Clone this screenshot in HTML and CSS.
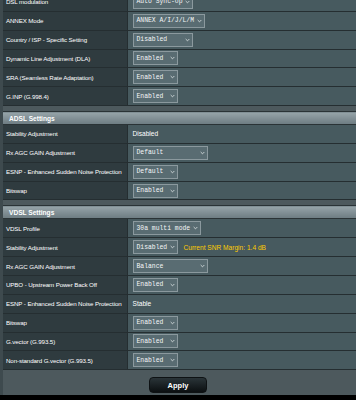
FILE: index.html
```html
<!DOCTYPE html>
<html lang="en">
<head>
  <meta charset="UTF-8">
  <title>DSL Settings</title>
  <link rel="stylesheet" href="styles.css">
</head>
<body>
  <div class="page">
    <table class="form-table first">
      <colgroup><col class="label-col"><col></colgroup>
      <tr>
        <th>DSL modulation</th>
        <td><div class="select w60"><span>Auto Sync-Up</span><svg class="arrow" viewBox="0 0 6 4"><path d="M0.8 0.8 L3 3 L5.2 0.8"/></svg></div></td>
      </tr>
      <tr>
        <th>ANNEX Mode</th>
        <td><div class="select w72"><span>ANNEX A/I/J/L/M</span><svg class="arrow" viewBox="0 0 6 4"><path d="M0.8 0.8 L3 3 L5.2 0.8"/></svg></div></td>
      </tr>
      <tr>
        <th>Country / ISP - Specific Setting</th>
        <td><div class="select w60"><span>Disabled</span><svg class="arrow" viewBox="0 0 6 4"><path d="M0.8 0.8 L3 3 L5.2 0.8"/></svg></div></td>
      </tr>
      <tr>
        <th>Dynamic Line Adjustment (DLA)</th>
        <td><div class="select"><span>Enabled</span><svg class="arrow" viewBox="0 0 6 4"><path d="M0.8 0.8 L3 3 L5.2 0.8"/></svg></div></td>
      </tr>
      <tr>
        <th>SRA (Seamless Rate Adaptation)</th>
        <td><div class="select"><span>Enabled</span><svg class="arrow" viewBox="0 0 6 4"><path d="M0.8 0.8 L3 3 L5.2 0.8"/></svg></div></td>
      </tr>
      <tr>
        <th>G.INP (G.998.4)</th>
        <td><div class="select"><span>Enabled</span><svg class="arrow" viewBox="0 0 6 4"><path d="M0.8 0.8 L3 3 L5.2 0.8"/></svg></div></td>
      </tr>
    </table>

    <table class="form-table">
      <colgroup><col class="label-col"><col></colgroup>
      <thead>
        <tr><td colspan="2">ADSL Settings</td></tr>
      </thead>
      <tr>
        <th>Stability Adjustment</th>
        <td>Disabled</td>
      </tr>
      <tr>
        <th>Rx AGC GAIN Adjustment</th>
        <td><div class="select w75"><span>Default</span><svg class="arrow" viewBox="0 0 6 4"><path d="M0.8 0.8 L3 3 L5.2 0.8"/></svg></div></td>
      </tr>
      <tr>
        <th>ESNP - Enhanced Sudden Noise Protection</th>
        <td><div class="select"><span>Default</span><svg class="arrow" viewBox="0 0 6 4"><path d="M0.8 0.8 L3 3 L5.2 0.8"/></svg></div></td>
      </tr>
      <tr>
        <th>Bitswap</th>
        <td><div class="select"><span>Enabled</span><svg class="arrow" viewBox="0 0 6 4"><path d="M0.8 0.8 L3 3 L5.2 0.8"/></svg></div></td>
      </tr>
    </table>

    <table class="form-table">
      <colgroup><col class="label-col"><col></colgroup>
      <thead>
        <tr><td colspan="2">VDSL Settings</td></tr>
      </thead>
      <tr>
        <th>VDSL Profile</th>
        <td><div class="select w68"><span>30a multi mode</span><svg class="arrow" viewBox="0 0 6 4"><path d="M0.8 0.8 L3 3 L5.2 0.8"/></svg></div></td>
      </tr>
      <tr>
        <th>Stability Adjustment</th>
        <td>
          <div class="inline">
            <div class="select"><span>Disabled</span><svg class="arrow" viewBox="0 0 6 4"><path d="M0.8 0.8 L3 3 L5.2 0.8"/></svg></div>
            <span class="hint">Current SNR Margin: 1.4 dB</span>
          </div>
        </td>
      </tr>
      <tr>
        <th>Rx AGC GAIN Adjustment</th>
        <td><div class="select w75"><span>Balance</span><svg class="arrow" viewBox="0 0 6 4"><path d="M0.8 0.8 L3 3 L5.2 0.8"/></svg></div></td>
      </tr>
      <tr>
        <th>UPBO - Upstream Power Back Off</th>
        <td><div class="select"><span>Enabled</span><svg class="arrow" viewBox="0 0 6 4"><path d="M0.8 0.8 L3 3 L5.2 0.8"/></svg></div></td>
      </tr>
      <tr>
        <th>ESNP - Enhanced Sudden Noise Protection</th>
        <td>Stable</td>
      </tr>
      <tr>
        <th>Bitswap</th>
        <td><div class="select"><span>Enabled</span><svg class="arrow" viewBox="0 0 6 4"><path d="M0.8 0.8 L3 3 L5.2 0.8"/></svg></div></td>
      </tr>
      <tr>
        <th>G.vector (G.993.5)</th>
        <td><div class="select"><span>Enabled</span><svg class="arrow" viewBox="0 0 6 4"><path d="M0.8 0.8 L3 3 L5.2 0.8"/></svg></div></td>
      </tr>
      <tr>
        <th>Non-standard G.vector (G.993.5)</th>
        <td><div class="select"><span>Enabled</span><svg class="arrow" viewBox="0 0 6 4"><path d="M0.8 0.8 L3 3 L5.2 0.8"/></svg></div></td>
      </tr>
    </table>

    <div class="apply-bar">
      <button class="apply-button">Apply</button>
    </div>
  </div>

  <div class="footer">
    <div class="footer-bar"></div>
  </div>
</body>
</html>
```

FILE: styles.css
```css
body {
  margin: 0;
  background-color: #4d595d;
  font-family: "Liberation Sans", Arial, sans-serif;
  font-size: 6.6px;
  color: #fff;
  overflow: hidden;
}

.page {
  margin-top: -7px;
  padding-left: 3px;
  background: linear-gradient(to right, #3e4a4e 0, #3e4a4e 3px, #4d595d 3px);
}

.form-table {
  width: 100%;
  table-layout: fixed;
  border-collapse: collapse;
  margin-bottom: 5px;
}

.label-col {
  width: 124px;
}

.form-table th,
.form-table td {
  height: 17.85px;
  padding: 0;
  border-bottom: 1px solid #252e31;
  white-space: nowrap;
}

.form-table th {
  padding-left: 3px;
  text-align: left;
  font-size: 6.2px;
  letter-spacing: -0.12px;
  font-weight: normal;
  background-color: #2f3b3f;
  border-right: 1px solid #252e31;
}

.form-table td {
  padding-left: 5px;
  background-color: #475a5f;
}

.form-table thead td {
  height: 12px;
  padding-left: 6px;
  font-weight: bold;
  background: linear-gradient(to bottom, #96a4a9, #6c7b81);
  border-top: 1px solid #2a3336;
  border-bottom: 1px solid #2a3336;
}

.select {
  display: flex;
  align-items: center;
  justify-content: space-between;
  width: 45px;
  height: 14px;
  box-sizing: border-box;
  padding: 0 2px 0 3px;
  background-color: #596c72;
  border: 1px solid #8b999e;
  font-family: "Liberation Mono", "Courier New", monospace;
  font-size: 6.4px;
  color: #f4f6f7;
  white-space: nowrap;
  overflow: hidden;
}

.select.w60 { width: 60px; }
.select.w68 { width: 68px; }
.select.w72 { width: 72px; }
.select.w75 { width: 75px; }

.arrow {
  width: 5px;
  height: 4px;
  flex: none;
  fill: none;
  stroke: #dde4e6;
  stroke-width: 1;
}

.inline {
  display: flex;
  align-items: center;
  gap: 6px;
}

.hint {
  color: #ffcc00;
}

.apply-bar {
  display: flex;
  justify-content: center;
  padding: 3px 0 2px;
  margin-top: -1px;
}

.apply-button {
  width: 58px;
  height: 16px;
  margin-left: -3px;
  border: 1px solid #0e1214;
  border-radius: 4px;
  background: linear-gradient(to bottom, #2a3438, #0b0f11);
  color: #fff;
  font-family: "Liberation Sans", Arial, sans-serif;
  font-size: 7.5px;
  font-weight: bold;
  cursor: pointer;
}

.footer {
  height: 10px;
  background-color: #000;
  padding-top: 5px;
  box-sizing: border-box;
}

.footer-bar {
  margin-left: 247px;
  width: 98px;
  height: 2px;
  background-color: #3a3f42;
}
```
